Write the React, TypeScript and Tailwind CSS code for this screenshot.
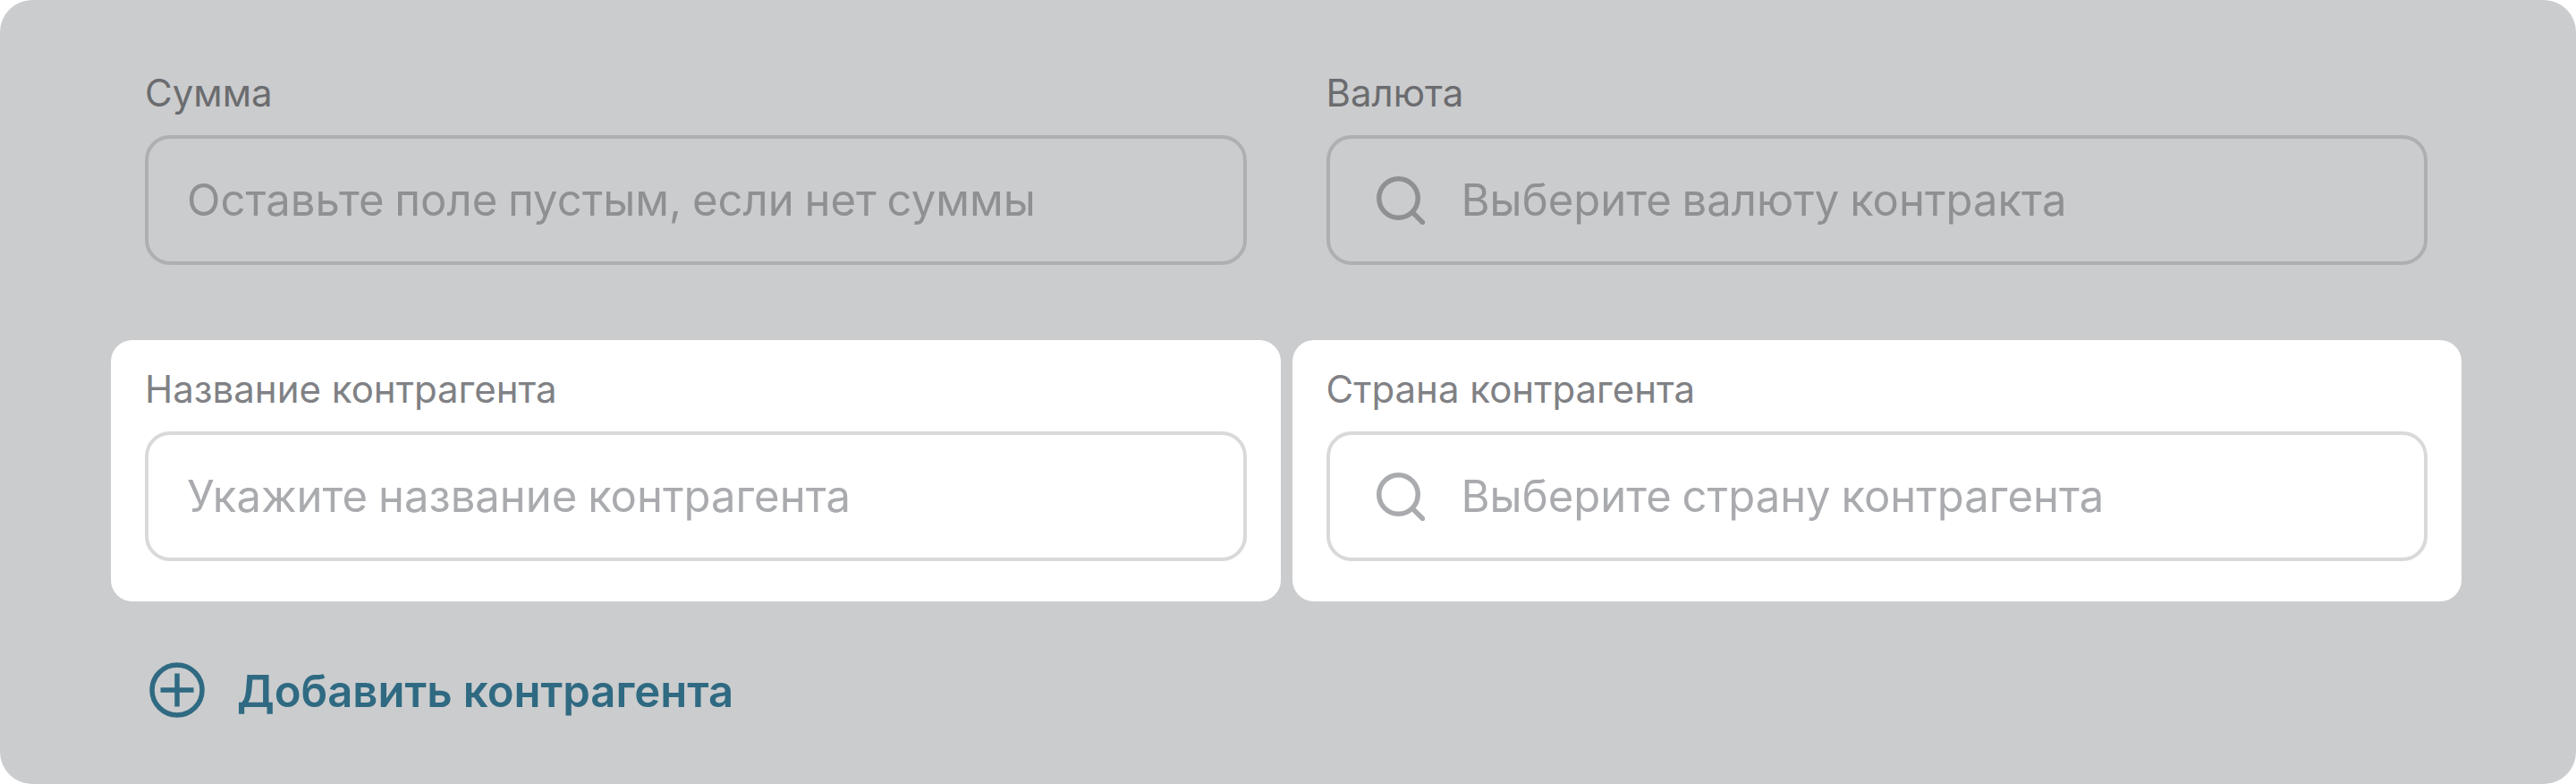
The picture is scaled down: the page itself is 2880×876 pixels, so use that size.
function SearchIcon({ className }: { className: string }) {
  return (
    <svg className={className} width="54" height="54" viewBox="0 0 54 54" fill="none" stroke="currentColor" strokeWidth="5.5" strokeLinecap="round">
      <circle cx="24.5" cy="24.5" r="21.75" />
      <path d="M41 41l10.5 10.5" />
    </svg>
  )
}

function PlusIcon() {
  return (
    <svg className="shrink-0" width="62" height="62" viewBox="0 0 62 62" fill="none" stroke="currentColor" strokeWidth="5.5">
      <circle cx="31" cy="31" r="28" />
      <path d="M31 12.5v37M12.5 31h37" />
    </svg>
  )
}

type FieldProps = {
  label: string
  placeholder: string
  search?: boolean
  active?: boolean
}

function Field({ label, placeholder, search, active }: FieldProps) {
  return (
    <div className={`h-[292px] rounded-[24px] px-[38px] pt-[31px] ${active ? 'bg-white' : ''}`}>
      <div className={`h-[71px] text-[42px] leading-[48px] ${active ? 'text-[#808185]' : 'text-[#6b6c6f]'}`}>{label}</div>
      <div
        className={`flex h-[145px] items-center rounded-[28px] border-[4px] text-[49px] [word-spacing:-2px] ${
          search ? 'pl-[52px]' : 'pl-[43px]'
        } ${active ? 'border-[#d8d9da] text-[#a9abae]' : 'border-[#aeafb1] text-[#8f9092]'}`}
      >
        {search && <SearchIcon className={`mr-[41px] shrink-0 ${active ? 'text-[#a9abae]' : 'text-[#8f9092]'}`} />}
        {placeholder}
      </div>
    </div>
  )
}

export default function App() {
  return (
    <div className="h-[876px] w-[2880px] bg-white font-['Inter',sans-serif]">
      <div className="h-full rounded-[36px] bg-[#cbccce] pl-[124px] pt-[49px]">
        <div className="grid w-[2628px] grid-cols-2 gap-x-[13px] gap-y-[39px]">
          <Field label="Сумма" placeholder="Оставьте поле пустым, если нет суммы" />
          <Field label="Валюта" placeholder="Выберите валюту контракта" search />
          <Field label="Название контрагента" placeholder="Укажите название контрагента" active />
          <Field label="Страна контрагента" placeholder="Выберите страну контрагента" search active />
        </div>
        <div className="ml-[43px] mt-[68px] flex items-start gap-[36px] text-[49px] leading-[62px] font-semibold text-[#2f6a82]">
          <PlusIcon />
          <span className="pt-[2px]">Добавить контрагента</span>
        </div>
      </div>
    </div>
  )
}
